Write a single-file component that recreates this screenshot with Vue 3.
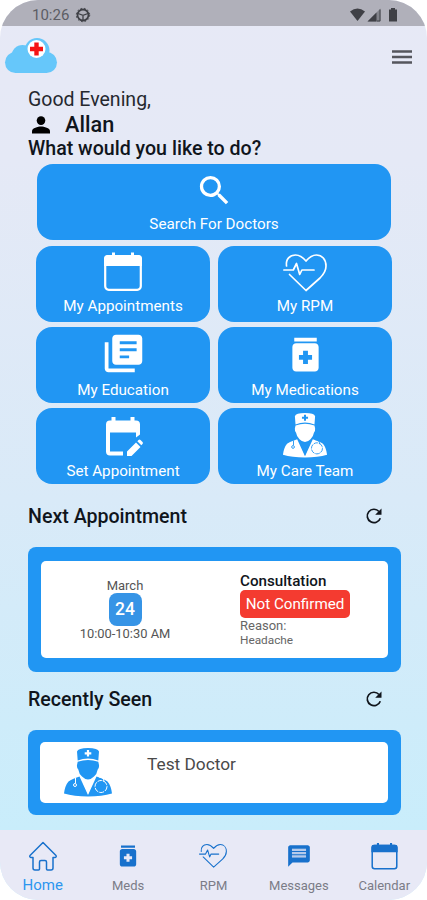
<script setup>
import { ref } from 'vue'

// Menu tiles under the search button
const tiles = [
  { label: 'My Appointments', icon: 'calendar', size: 42 },
  { label: 'My RPM', icon: 'heart', size: 44 },
  { label: 'My Education', icon: 'library', size: 45 },
  { label: 'My Medications', icon: 'meds', size: 45 },
  { label: 'Set Appointment', icon: 'calendar-edit', size: 42 },
  { label: 'My Care Team', icon: 'doctor', size: 46 }
]

// Bottom navigation
const tabs = [
  { label: 'Home', icon: 'home', size: 30 },
  { label: 'Meds', icon: 'meds', size: 28 },
  { label: 'RPM', icon: 'heart', size: 28 },
  { label: 'Messages', icon: 'message', size: 26 },
  { label: 'Calendar', icon: 'calendar', size: 29 }
]
const activeTab = ref('Home')
</script>

<template>
  <svg class="symbols" aria-hidden="true">
    <symbol id="search" viewBox="0 0 24 24">
      <path fill="currentColor" d="M15.5 14h-.79l-.28-.27A6.47 6.47 0 0 0 16 9.5 6.5 6.5 0 1 0 9.5 16c1.61 0 3.09-.59 4.23-1.57l.27.28v.79l5 4.99L20.49 19l-4.99-5zm-6 0a4.5 4.5 0 1 1 0-9 4.5 4.5 0 0 1 0 9z" />
    </symbol>
    <symbol id="calendar" viewBox="0 0 42 42">
      <rect x="3.2" y="5.2" width="35.6" height="33.6" rx="3.5" fill="none" stroke="currentColor" stroke-width="2.2" />
      <path fill="currentColor" d="M2 15V7.5Q2 4 5.500 4H10V1.500h3V4h16V1.500h3V4h4.500Q40 4 40 7.500V15z" />
    </symbol>
    <symbol id="heart" viewBox="0 0 44 44">
      <g fill="none" stroke="currentColor" stroke-width="1.7" stroke-linejoin="round" stroke-linecap="round">
        <path d="M3.500 15C2.500 8 7 4 12.500 4c4.500 0 7.500 2.500 10.500 6 3-3.500 6-6 10.500-6C39 4 43 8.500 43 15c0 5-2.500 8.500-6 12L23 39.500 6.500 23.500" />
        <path d="M.8 19h9.500l3.200-6.500 3.200 11 2.200-4.500H31" />
      </g>
    </symbol>
    <symbol id="library" viewBox="0 0 24 24">
      <path fill="currentColor" d="M4 6H2v14c0 1.100.9 2 2 2h14v-2H4V6zm16-4H8c-1.100 0-2 .9-2 2v12c0 1.100.9 2 2 2h12c1.100 0 2-.9 2-2V4c0-1.100-.9-2-2-2zm-1 5h-9V5.500h9zm0 3.800h-9V9.200h9zm-4 3.700h-5V13h5z" />
    </symbol>
    <symbol id="meds" viewBox="0 0 24 24">
      <path fill="currentColor" fill-rule="evenodd" d="M6 3h12v2H6zM17 6H7c-1.100 0-2 .9-2 2v11c0 1.100.9 2 2 2h10c1.100 0 2-.9 2-2V8c0-1.100-.9-2-2-2zM15.500 14.800h-2.200V17h-2.600v-2.200H8.500v-2.600h2.200V10h2.600v2.200h2.200z" />
    </symbol>
    <symbol id="calendar-edit" viewBox="0 0 42 42">
      <path fill="currentColor" d="M4 8.500Q4 4.500 8 4.500h1.500V1h4v3.500h15V1h4v3.500H34q4 0 4 4v10l-4 3v-5H8v19h13v4H8q-4 0-4-4z" />
      <path fill="currentColor" d="M25 35.500l9-9 4.500 4.500-9 9H25zM35.300 25.200l1.200-1.200q1-1 2 0l2 2q1 1 0 2l-1.200 1.200z" />
    </symbol>
    <symbol id="doctor" viewBox="0 0 48 50">
      <g fill="currentColor">
        <path d="M13 4.500Q14 1 24 1t11 3.500L34.300 13.500Q24 9.500 13.700 13.500z" />
        <path d="M13.700 14.800Q24 11 34.300 14.800L35 18q.3 3-1.300 4.500Q33 27 30 29.500q-3 3-6 3t-6-3q-3-2.500-3.700-7Q12.700 21 13 18z" />
        <path d="M15.500 29.500L24 48 32.500 29.500Q40 32 43.500 34.500 47 38.500 48 46.500 38 49.500 24 49.500T0 46.500Q1 38.500 4.500 34.500 8 32 15.500 29.500z" />
      </g>
      <path class="cut" d="M17 30.500L24 47l7-16.500q-3.500 3.500-7 3.500t-7-3.500z" />
      <path class="cut" d="M22.900 3h2.200v2.200h2.200v2.200h-2.200v2.200h-2.200V7.400h-2.200V5.200h2.200z" />
      <g class="cut-line">
        <path d="M11.500 31v5" />
        <circle cx="11" cy="38" r="1.500" />
        <circle cx="37" cy="39.500" r="6" stroke-dasharray="5 1" />
        <path d="M35 30q5 0 5 5" />
      </g>
    </symbol>
    <symbol id="home" viewBox="0 0 30 30">
      <path fill="none" stroke="currentColor" stroke-width="1.500" stroke-linejoin="round" d="M15 1.500L2 14.500q-.8 1.500 1 2h2V27q0 2 2 2h3.500q1 0 1-1v-7q0-1.500 1.500-1.500h4q1.500 0 1.500 1.500v7q0 1 1 1H23q2 0 2-2V16.500h2q1.800-.5 1-2z" />
    </symbol>
    <symbol id="message" viewBox="0 0 24 24">
      <path fill="currentColor" fill-rule="evenodd" d="M20 2H4c-1.100 0-2 .9-2 2v18l4-4h14c1.100 0 2-.9 2-2V4c0-1.100-.9-2-2-2zM5.500 5.300h13v2h-13zM5.500 8.300h13v2h-13zM5.500 11.300h13v2h-13z" />
      <path fill="currentColor" opacity=".25" d="M5.500 5.300h13v8h-13z" />
    </symbol>
    <symbol id="refresh" viewBox="0 0 18 18">
      <path fill="none" stroke="currentColor" stroke-width="1.700" d="M15.300 11.200A6.700 6.700 0 1 1 14 4.500" />
      <path fill="currentColor" d="M16.500 1.500v6.300h-6.300z" />
    </symbol>
  </svg>

  <div class="phone">
    <div class="status-bar">
      <span class="time">10:26</span>
      <svg class="wheel" width="16" height="16" viewBox="0 0 16 16">
        <g fill="none" stroke="currentColor">
          <circle cx="8" cy="8" r="5.500" stroke-width="1.800" />
          <circle cx="8" cy="8" r="6.700" stroke-width="1" stroke-dasharray="1.600 2" />
          <path stroke-width="1.300" d="M3 6.500l5 1.800 5-1.800M8 8.300v5" />
        </g>
      </svg>
      <svg class="signals" width="50" height="16" viewBox="0 0 50 16">
        <path fill="currentColor" d="M1 4.500Q8.500-1.500 16 4.500L8.500 14z" />
        <path fill="currentColor" opacity=".4" d="M18.500 14.500L31.500 1.500v13z" />
        <path fill="currentColor" d="M18.500 14.500l9-9v9z" />
        <path fill="none" stroke="currentColor" d="M28 14h3V2.500" />
        <path fill="currentColor" d="M40 2.500h2V1h4v1.500h2v12h-8z" />
      </svg>
    </div>

    <header class="top-bar">
      <svg class="logo" width="54" height="38" viewBox="0 0 54 38">
        <g fill="#66c7fa">
          <circle cx="11.500" cy="25.500" r="10.500" />
          <circle cx="18.500" cy="19" r="11" />
          <circle cx="33" cy="13.500" r="12.500" />
          <circle cx="42.500" cy="25.500" r="10.500" />
          <rect x="11" y="18" width="32" height="18" />
        </g>
        <circle cx="32.500" cy="12" r="9" fill="#fff" />
        <path fill="#f51414" d="M30.300 5.500h4.400v4.300H39v4.400h-4.300v4.300h-4.400v-4.300H26V9.800h4.300z" />
      </svg>
      <svg class="burger" width="20" height="16" viewBox="0 0 20 16">
        <path stroke="currentColor" stroke-width="2.400" d="M0 2.500h20M0 8h20M0 13.500h20" />
      </svg>
    </header>

    <main>
      <div class="greeting">
        <div class="hello">Good Evening,</div>
        <div class="user">
          <svg width="18" height="18" viewBox="0 0 18 18">
            <circle cx="9" cy="4.600" r="4.300" />
            <path d="M0 17.500v-2.300C0 12 6 10.500 9 10.500s9 1.500 9 4.700v2.300z" />
          </svg>
          <span>Allan</span>
        </div>
        <div class="question">What would you like to do?</div>
      </div>

      <button class="tile search">
        <svg width="39" height="39"><use href="#search" /></svg>
        <span>Search For Doctors</span>
      </button>

      <div class="tiles">
        <button v-for="tile in tiles" :key="tile.label" :class="['tile', tile.icon]">
          <svg :width="tile.size" :height="tile.size"><use :href="'#' + tile.icon" /></svg>
          <span>{{ tile.label }}</span>
        </button>
      </div>

      <div class="section-title">
        <h2>Next Appointment</h2>
        <svg width="18" height="18"><use href="#refresh" /></svg>
      </div>
      <div class="card appointment">
        <div class="card-body">
          <div class="when">
            <span class="month">March</span>
            <span class="day">24</span>
            <span class="hours">10:00-10:30 AM</span>
          </div>
          <div class="details">
            <strong>Consultation</strong>
            <span class="status">Not Confirmed</span>
            <span class="reason">Reason:</span>
            <span class="reason-text">Headache</span>
          </div>
        </div>
      </div>

      <div class="section-title second">
        <h2>Recently Seen</h2>
        <svg width="18" height="18"><use href="#refresh" /></svg>
      </div>
      <div class="card seen">
        <div class="card-body">
          <svg width="50" height="50"><use href="#doctor" /></svg>
          <span class="doctor-name">Test Doctor</span>
        </div>
      </div>
    </main>

    <nav>
      <button
        v-for="tab in tabs"
        :key="tab.label"
        :class="{ active: activeTab === tab.label }"
        @click="activeTab = tab.label"
      >
        <span class="tab-icon">
          <svg :width="tab.size" :height="tab.size"><use :href="'#' + tab.icon" /></svg>
        </span>
        <span class="tab-label">{{ tab.label }}</span>
      </button>
    </nav>
  </div>
</template>

<style>
body {
  margin: 0;
  background: #fff;
}
</style>

<style scoped>
.symbols {
  position: absolute;
  width: 0;
  height: 0;
}

.phone {
  width: 427px;
  height: 900px;
  box-sizing: border-box;
  display: flex;
  flex-direction: column;
  overflow: hidden;
  border-radius: 38px;
  background: linear-gradient(#e7e9f6 0, #e5e9f6 160px, #d9eaf8 500px, #c9edfb 830px);
  font-family: Roboto, "Liberation Sans", sans-serif;
  color: #10151c;
}

svg {
  display: block;
  flex: none;
}

button {
  border: none;
  padding: 0;
  font-family: inherit;
  cursor: pointer;
}

.status-bar {
  height: 26px;
  flex: none;
  display: flex;
  align-items: center;
  padding: 3px 28px 0 32px;
  box-sizing: border-box;
  background: #b0b0ba;
  color: #3f4046;
}

.time {
  font-size: 15px;
  line-height: 22px;
  color: #5c5d64;
}

.wheel {
  margin-left: 6px;
}

.signals {
  margin-left: auto;
}

.top-bar {
  height: 61px;
  flex: none;
  display: flex;
  justify-content: space-between;
  padding: 11px 15px 0 4px;
  box-sizing: border-box;
}

.burger {
  margin-top: 12px;
  color: #55565d;
}

main {
  flex: 1;
  padding: 0 26px 0 28px;
}

.greeting {
  padding-top: 1px;
}

.hello {
  font-size: 19.5px;
  line-height: 24px;
  color: #25282f;
}

.user {
  display: flex;
  align-items: center;
  gap: 15px;
  padding-left: 4px;
  font-size: 21.7px;
  font-weight: 500;
  line-height: 25px;
}

.question {
  font-size: 19.6px;
  font-weight: 500;
  line-height: 24px;
}

.tile {
  height: 76px;
  box-sizing: border-box;
  display: flex;
  flex-direction: column;
  align-items: center;
  justify-content: space-between;
  padding: 5px 0 6px;
  border-radius: 16px;
  background: #2196f3;
  color: #fff;
  font-size: 15.2px;
  line-height: 19px;
}

.search {
  width: 354px;
  margin: 3px 0 0 9px;
  padding-top: 7px;
}

.tiles {
  display: grid;
  grid-template-columns: 174px 174px;
  gap: 5px 8px;
  margin: 6px 0 0 8px;
}

/* the lower rows keep their labels closer to the edge */
.tiles .tile:nth-child(n + 3) {
  padding-bottom: 3px;
}

.tiles .library,
.tiles .doctor {
  padding-top: 4px;
}

.tiles .calendar-edit {
  padding-top: 8px;
}

.cut {
  fill: var(--cut, #2196f3);
}

.cut-line {
  fill: none;
  stroke: var(--cut, #2196f3);
  stroke-width: 1;
}

.section-title {
  display: flex;
  justify-content: space-between;
  align-items: center;
  height: 24px;
  margin-top: 20px;
  padding-right: 18px;
}

.section-title.second {
  margin-top: 15px;
}

h2 {
  margin: 0;
  font-size: 19.6px;
  font-weight: 500;
}

.card {
  box-sizing: border-box;
  border-radius: 8px;
  background: #2196f3;
}

.card-body {
  height: 100%;
  display: flex;
  background: #fff;
  border-radius: 5px;
}

.appointment {
  height: 125px;
  margin-top: 19px;
  padding: 14px 13px;
}

.when {
  width: 168px;
  display: flex;
  flex-direction: column;
  align-items: center;
  padding-top: 17px;
}

.month {
  font-size: 13px;
  line-height: 15px;
  color: #555;
}

.day {
  width: 33px;
  height: 33px;
  border-radius: 8px;
  background: #3694e6;
  color: #fff;
  font-size: 17.5px;
  font-weight: 500;
  line-height: 33px;
  text-align: center;
}

.hours {
  font-size: 12.9px;
  line-height: 16px;
  color: #555;
}

.details {
  display: flex;
  flex-direction: column;
  align-items: flex-start;
  padding: 12px 0 0 31px;
}

.details strong {
  font-size: 15.2px;
  font-weight: 500;
  line-height: 17px;
}

.status {
  width: 110px;
  height: 28px;
  border-radius: 5px;
  background: #f43b30;
  color: #fff;
  font-size: 15.2px;
  line-height: 28px;
  text-align: center;
}

.reason {
  font-size: 13px;
  line-height: 15px;
  color: #666;
}

.reason-text {
  font-size: 11.8px;
  line-height: 14px;
  color: #666;
}

.seen {
  height: 85px;
  margin-top: 19px;
  padding: 12px 13px 12px 12px;
}

.seen .card-body {
  --cut: #fff;
  color: #2196f3;
  padding: 5px 0 0 23px;
  box-sizing: border-box;
}

.doctor-name {
  margin: 6px 0 0 34px;
  font-size: 17.3px;
  line-height: 22px;
  color: #4a4a4a;
}

nav {
  height: 70px;
  flex: none;
  display: grid;
  grid-template-columns: repeat(5, 1fr);
  background: #e8e9f6;
}

nav button {
  display: flex;
  flex-direction: column;
  align-items: center;
  background: none;
  color: #7b7c87;
  font-size: 13px;
}

.tab-icon {
  height: 44px;
  display: flex;
  align-items: center;
  padding-top: 8px;
  box-sizing: border-box;
  color: #1871cc;
}

.tab-label {
  line-height: 23px;
}

nav .active {
  color: #2c96ef;
  font-size: 15px;
}

nav .active .tab-icon {
  padding-top: 7px;
}
</style>
